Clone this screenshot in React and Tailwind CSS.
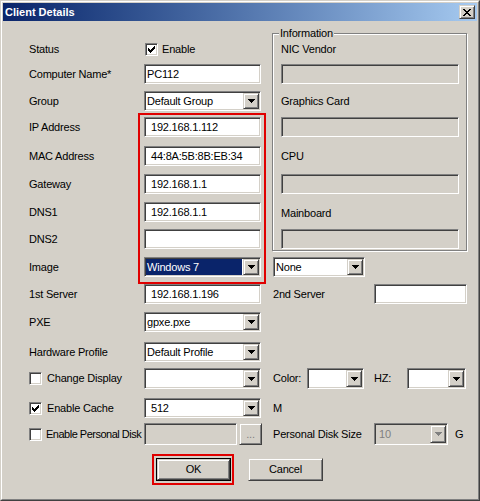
import React from 'react';

const sunken =
  'border border-t-[#808080] border-l-[#808080] border-b-white border-r-white shadow-[inset_1px_1px_0_#404040,inset_-1px_-1px_0_#d4d0c8]';
const raised =
  'border border-t-[#d4d0c8] border-l-[#d4d0c8] border-b-[#404040] border-r-[#404040] shadow-[inset_1px_1px_0_#ffffff,inset_-1px_-1px_0_#808080]';

const Arrow = ({ disabled }) => (
  <svg width="7" height="4" viewBox="0 0 7 4" shapeRendering="crispEdges">
    <path d="M0 0h7v1h-1v1h-1v1h-1v1h-1v-1h-1v-1h-1v-1h-1z" fill={disabled ? '#808080' : '#000'} />
  </svg>
);

const CheckMark = () => (
  <svg width="7" height="7" viewBox="0 0 7 7" shapeRendering="crispEdges" fill="#000">
    <rect x="6" y="0" width="1" height="1" />
    <rect x="5" y="1" width="2" height="1" />
    <rect x="0" y="2" width="1" height="1" />
    <rect x="4" y="2" width="3" height="1" />
    <rect x="0" y="3" width="2" height="1" />
    <rect x="3" y="3" width="3" height="1" />
    <rect x="0" y="4" width="5" height="1" />
    <rect x="1" y="5" width="3" height="1" />
    <rect x="2" y="6" width="1" height="1" />
  </svg>
);

const Check = ({ checked }) => (
  <div className={`${sunken} w-[13px] h-[13px] bg-white flex items-center justify-center shrink-0`}>
    {checked && <CheckMark />}
  </div>
);

const Edit = ({ w, value, pad = 'pl-[2px]', disabled, h = 'h-[20px]' }) => (
  <div
    className={`${sunken} ${w} ${h} ${disabled ? 'bg-[#d4d0c8]' : 'bg-white'} ${pad} flex items-center whitespace-nowrap overflow-hidden shrink-0`}
  >
    {value}
  </div>
);

const Combo = ({ w, value, selected, disabled, h = 'h-[20px]' }) => (
  <div className={`${sunken} ${w} ${h} ${disabled ? 'bg-[#d4d0c8]' : 'bg-white'} flex p-[1px] shrink-0`}>
    <div
      className={`flex-1 flex items-center min-w-0 pl-[1px] whitespace-nowrap overflow-hidden ${
        selected ? 'bg-[#0a246a] text-white mr-[1px]' : disabled ? 'text-[#808080]' : 'text-black'
      }`}
    >
      {value}
    </div>
    <div className={`${raised} w-[16px] h-full bg-[#d4d0c8] flex items-center justify-center shrink-0`}>
      <Arrow disabled={disabled} />
    </div>
  </div>
);

const Label = ({ children, w = 'w-[115px]' }) => (
  <div className={`${w} shrink-0 whitespace-nowrap`}>{children}</div>
);

export default function App() {
  return (
    <div className="w-[480px] h-[501px] relative bg-[#d4d0c8] border border-t-[#d4d0c8] border-l-[#d4d0c8] border-r-[#404040] border-b-[#404040] font-['Liberation_Sans',Arial,sans-serif] text-[11px] tracking-[-0.2px] text-black leading-none select-none">
      <div className="h-full border border-t-white border-l-white border-r-[#808080] border-b-[#808080] p-[1px] flex flex-col">
        {/* Title bar */}
        <div className="h-[18px] shrink-0 flex items-center bg-gradient-to-r from-[#0a246a] to-[#a6caf0] pl-[2px] pr-[2px]">
          <span className="text-white font-bold text-[11px] tracking-normal flex-1">Client Details</span>
          <div className={`${raised} w-[16px] h-[14px] bg-[#d4d0c8] flex items-center justify-center`}>
            <svg width="8" height="7" viewBox="0 0 8 7" shapeRendering="crispEdges" fill="#000">
              <path d="M0 0h2v1h1v1h2V1h1V0h2v1H7v1H6v1H5v1h1v1h1v1h1v1H6V6H5V5H3v1H2v1H0V6h1V5h1V4h1V3H2V2H1V1H0z" />
            </svg>
          </div>
        </div>

        {/* Body */}
        <div className="pl-[26px] flex flex-col">
          <div className="flex">
            {/* Left column */}
            <div className="w-[232px] flex flex-col">
              <div className="mt-[18px] h-[20px] flex items-center">
                <Label w="w-[116px]">Status</Label>
                <Check checked />
                <span className="ml-[4px]">Enable</span>
              </div>
              <div className="mt-[5px] h-[20px] flex items-center">
                <Label>Computer Name*</Label>
                <Edit w="w-[117px]" value="PC112" />
              </div>
              <div className="mt-[7px] h-[20px] flex items-center">
                <Label>Group</Label>
                <Combo w="w-[117px]" value="Default Group" />
              </div>
              <div className="mt-[6px] h-[20px] flex items-center">
                <Label>IP Address</Label>
                <Edit w="w-[117px]" value="192.168.1.112" pad="pl-[6px]" />
              </div>
              <div className="mt-[9px] h-[20px] flex items-center">
                <Label>MAC Address</Label>
                <Edit w="w-[117px]" value="44:8A:5B:8B:EB:34" pad="pl-[6px]" />
              </div>
              <div className="mt-[8px] h-[20px] flex items-center">
                <Label>Gateway</Label>
                <Edit w="w-[117px]" value="192.168.1.1" pad="pl-[6px]" />
              </div>
              <div className="mt-[8px] h-[20px] flex items-center">
                <Label>DNS1</Label>
                <Edit w="w-[117px]" value="192.168.1.1" pad="pl-[6px]" />
              </div>
              <div className="mt-[7px] h-[20px] flex items-center">
                <Label>DNS2</Label>
                <Edit w="w-[117px]" value="" />
              </div>
              <div className="mt-[8px] h-[20px] flex items-center">
                <Label>Image</Label>
                <Combo w="w-[117px]" value="Windows 7" selected />
              </div>
            </div>

            {/* Right column */}
            <div className="ml-[11px] w-[195px] flex flex-col">
              <div className="relative mt-[12px] w-[195px] h-[218px] border border-[#808080] shadow-[inset_1px_1px_0_#ffffff,1px_1px_0_#ffffff] pl-[8px] flex flex-col">
                <span className="absolute left-[6px] -top-[7px] bg-[#d4d0c8] px-[1px] leading-[13px]">Information</span>
                <div className="mt-[5px] h-[20px] flex items-center">NIC Vendor</div>
                <div className="mt-[5px]">
                  <Edit w="w-[178px]" disabled />
                </div>
                <div className="mt-[7px] h-[20px] flex items-center">Graphics Card</div>
                <div className="mt-[6px]">
                  <Edit w="w-[178px]" disabled />
                </div>
                <div className="mt-[9px] h-[20px] flex items-center">CPU</div>
                <div className="mt-[8px]">
                  <Edit w="w-[178px]" disabled />
                </div>
                <div className="mt-[9px] h-[20px] flex items-center">Mainboard</div>
                <div className="mt-[6px]">
                  <Edit w="w-[178px]" disabled />
                </div>
              </div>
              <div className="mt-[6px] ml-[1px]">
                <Combo w="w-[92px]" value="None" />
              </div>
            </div>
          </div>

          {/* Lower rows */}
          <div className="mt-[7px] h-[20px] flex items-center">
            <Label>1st Server</Label>
            <Edit w="w-[117px]" value="192.168.1.196" pad="pl-[6px]" />
            <div className="ml-[12px] w-[101px] shrink-0">2nd Server</div>
            <Edit w="w-[93px]" value="" />
          </div>
          <div className="mt-[8px] h-[20px] flex items-center">
            <Label>PXE</Label>
            <Combo w="w-[117px]" value="gpxe.pxe" />
          </div>
          <div className="mt-[10px] h-[20px] flex items-center">
            <Label>Hardware Profile</Label>
            <Combo w="w-[117px]" value="Default Profile" />
          </div>
          <div className="mt-[6px] h-[21px] flex items-center">
            <div className="w-[115px] shrink-0 flex items-center">
              <Check />
              <span className="ml-[5px]">Change Display</span>
            </div>
            <Combo w="w-[117px]" h="h-[21px]" value="" />
            <div className="ml-[12px] w-[34px] shrink-0">Color:</div>
            <Combo w="w-[57px]" h="h-[21px]" value="" />
            <div className="ml-[10px] w-[33px] shrink-0">HZ:</div>
            <Combo w="w-[59px]" h="h-[21px]" value="" />
          </div>
          <div className="mt-[9px] h-[20px] flex items-center">
            <div className="w-[115px] shrink-0 flex items-center">
              <Check checked />
              <span className="ml-[5px]">Enable Cache</span>
            </div>
            <Combo w="w-[117px]" value={<span className="pl-[4px]">512</span>} />
            <div className="ml-[12px]">M</div>
          </div>
          <div className="mt-[5px] h-[22px] flex items-center">
            <div className="w-[115px] shrink-0 flex items-center whitespace-nowrap">
              <Check />
              <span className="ml-[4px] tracking-[-0.5px]">Enable Personal Disk</span>
            </div>
            <Edit w="w-[93px]" h="h-[22px]" disabled />
            <div className={`${raised} ml-[2px] w-[23px] h-[22px] bg-[#d4d0c8] flex items-center justify-center text-[#808080] shrink-0`}>
              ...
            </div>
            <div className="ml-[11px] w-[101px] shrink-0 whitespace-nowrap">Personal Disk Size</div>
            <Combo w="w-[74px]" h="h-[22px]" value={<span className="pl-[2px]">10</span>} disabled />
            <div className="ml-[7px]">G</div>
          </div>
          <div className="mt-[13px] h-[23px] flex items-center">
            <div className="ml-[127px] w-[75px] h-[23px] border border-black shrink-0">
              <div className={`${raised} w-full h-full bg-[#d4d0c8] flex items-center justify-center`}>OK</div>
            </div>
            <div className={`${raised} ml-[17px] w-[75px] h-[23px] bg-[#d4d0c8] flex items-center justify-center shrink-0`}>
              Cancel
            </div>
          </div>
        </div>
      </div>

      {/* Red annotation boxes */}
      <div className="absolute left-[137px] top-[112px] w-[128px] h-[171px] border-2 border-[#e00000] pointer-events-none" />
      <div className="absolute left-[151px] top-[453px] w-[82px] h-[31px] border-2 border-[#e00000] pointer-events-none" />
    </div>
  );
}
